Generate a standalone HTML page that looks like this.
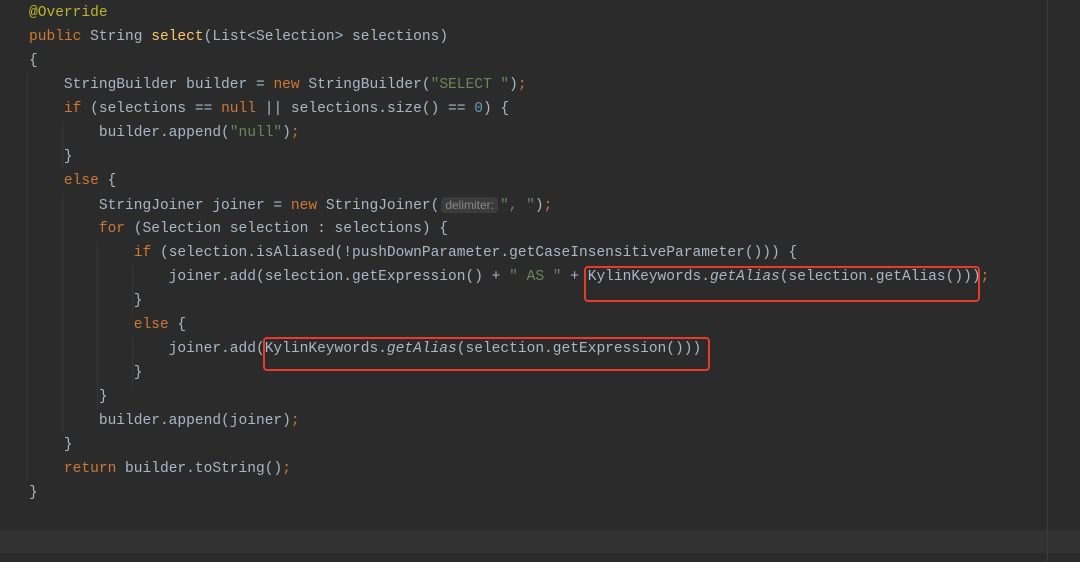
<!DOCTYPE html>
<html><head><meta charset="utf-8"><style>
html,body{margin:0;padding:0;}
body{width:1080px;height:561px;background:#2b2b2b;position:relative;overflow:hidden;font-family:"Liberation Mono",monospace;font-size:14.56px;color:#a9b7c6;}
.w{position:absolute;left:0;top:1px;width:1080px;height:561px;}
.l{position:absolute;left:29px;height:24px;line-height:24px;white-space:pre;}
.k{color:#cc7832}.s{color:#6a8759}.a{color:#bbb529}.f{color:#ffc66d}.n{color:#6897bb}.i{font-style:italic}
.hint{font-family:"Liberation Sans",sans-serif;font-size:12px;color:#8a8a8a;background:#3b3b3b;border-radius:4px;padding:1px 4px;margin:0 2px 0 2px;}
.g{position:absolute;width:1px;background:#373737;}
.box{position:absolute;border:2px solid #e8392b;border-radius:4px;}
</style></head><body>
<div style="position:absolute;left:0;top:530px;width:1080px;height:23px;background:#323232"></div>
<div style="position:absolute;left:1047px;top:0;width:1px;height:561px;background:#3c3c3c"></div>
<div class="w">
<div class="g" style="left:27px;top:72px;height:408px"></div>
<div class="g" style="left:62px;top:120px;height:48px"></div>
<div class="g" style="left:62px;top:192px;height:240px"></div>
<div class="g" style="left:97px;top:240px;height:168px"></div>
<div class="g" style="left:132px;top:264px;height:48px"></div>
<div class="g" style="left:132px;top:336px;height:48px"></div>
<div class="l" style="top:0"><span class="a">@Override</span></div>
<div class="l" style="top:24px"><span class="k">public</span> String <span class="f">select</span>(List&lt;Selection&gt; selections)</div>
<div class="l" style="top:48px">{</div>
<div class="l" style="top:72px">    StringBuilder builder = <span class="k">new</span> StringBuilder(<span class="s">"SELECT "</span>)<span class="k">;</span></div>
<div class="l" style="top:96px">    <span class="k">if</span> (selections == <span class="k">null</span> || selections.size() == <span class="n">0</span>) {</div>
<div class="l" style="top:120px">        builder.append(<span class="s">"null"</span>)<span class="k">;</span></div>
<div class="l" style="top:144px">    }</div>
<div class="l" style="top:168px">    <span class="k">else</span> {</div>
<div class="l" style="top:192px">        StringJoiner joiner = <span class="k">new</span> StringJoiner(<span class="hint">delimiter:</span><span class="s">", "</span>)<span class="k">;</span></div>
<div class="l" style="top:216px">        <span class="k">for</span> (Selection selection : selections) {</div>
<div class="l" style="top:240px">            <span class="k">if</span> (selection.isAliased(!pushDownParameter.getCaseInsensitiveParameter())) {</div>
<div class="l" style="top:264px">                joiner.add(selection.getExpression() + <span class="s">" AS "</span> + KylinKeywords.<span class="i">getAlias</span>(selection.getAlias()))<span class="k">;</span></div>
<div class="l" style="top:288px">            }</div>
<div class="l" style="top:312px">            <span class="k">else</span> {</div>
<div class="l" style="top:336px">                joiner.add(KylinKeywords.<span class="i">getAlias</span>(selection.getExpression()))</div>
<div class="l" style="top:360px">            }</div>
<div class="l" style="top:384px">        }</div>
<div class="l" style="top:408px">        builder.append(joiner)<span class="k">;</span></div>
<div class="l" style="top:432px">    }</div>
<div class="l" style="top:456px">    <span class="k">return</span> builder.toString()<span class="k">;</span></div>
<div class="l" style="top:480px">}</div>
</div>
<div class="box" style="left:584px;top:266px;width:392px;height:32px"></div>
<div class="box" style="left:263px;top:337px;width:443px;height:30px"></div>
</body></html>
